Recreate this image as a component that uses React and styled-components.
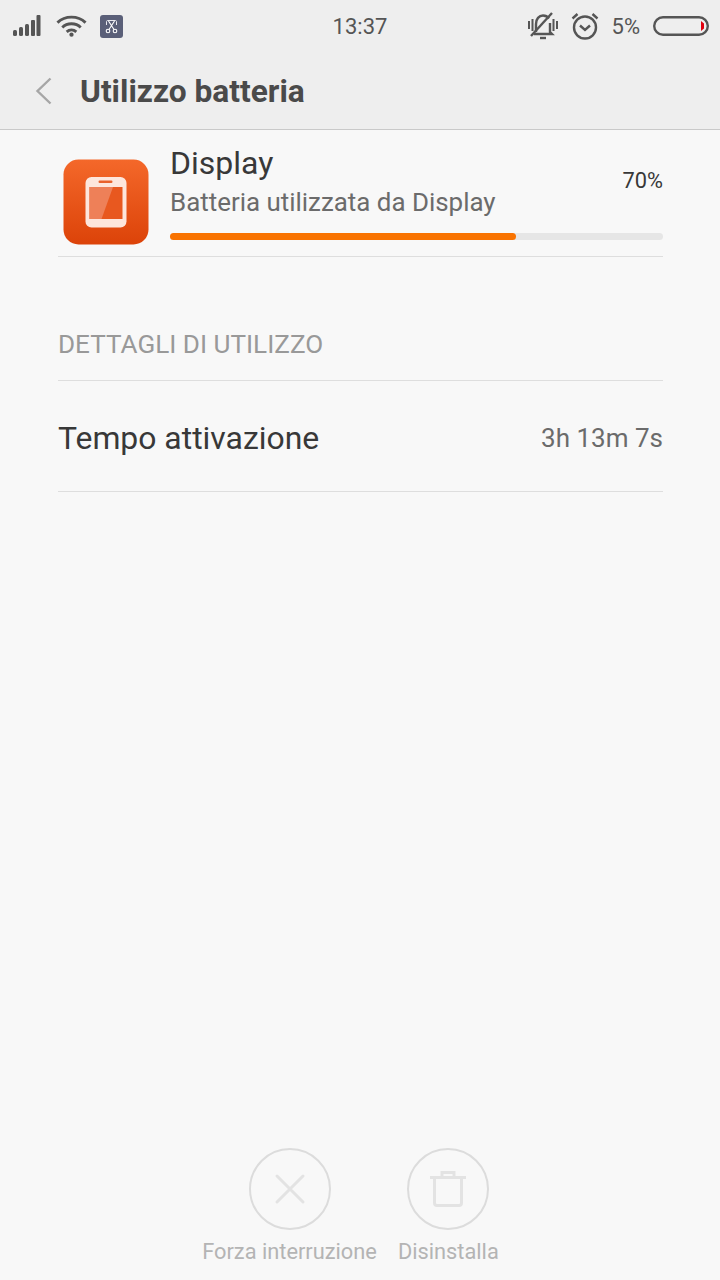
import React from 'react';
import styled, { createGlobalStyle } from 'styled-components';

const GlobalStyle = createGlobalStyle`
  html, body {
    margin: 0;
    padding: 0;
    background: #f8f8f8;
    font-family: Roboto, "Noto Sans", sans-serif;
  }
`;

const Page = styled.div`
  display: flex;
  flex-direction: column;
  height: 1280px;
  width: 720px;
  overflow: hidden;
  background: #f8f8f8;
`;

const Header = styled.header`
  background: #eeeeee;
  border-bottom: 1px solid #c9c9c9;
  box-sizing: border-box;
  height: 130px;
`;

const StatusBar = styled.div`
  align-items: center;
  display: grid;
  grid-template-columns: 1fr auto 1fr;
  height: 52px;
  padding: 0 11px 0 13px;
  color: #555;
`;

const StatusGroup = styled.div`
  align-items: center;
  display: flex;
  gap: ${(p) => p.$gap || 0}px;
  justify-content: ${(p) => (p.$end ? 'flex-end' : 'flex-start')};
`;

const Clock = styled.div`
  font-size: 22px;
  color: #555;
  padding-right: 2px;
`;

const Percent = styled.span`
  font-size: 22px;
  color: #555;
`;

const TitleRow = styled.div`
  align-items: center;
  display: flex;
  gap: 27px;
  height: 78px;
  padding: 0 0 0 35px;
`;

const Title = styled.h1`
  color: #4a4a4a;
  font-size: 31.7px;
  font-weight: 700;
  margin: 0;
`;

const Content = styled.main`
  display: flex;
  flex: 1;
  flex-direction: column;
  padding: 0 57px 0 58px;
`;

const AppRow = styled.section`
  border-bottom: 1px solid #dedede;
  box-sizing: border-box;
  display: flex;
  gap: 21px;
  height: 127px;
  padding: 14px 0 0 5px;
`;

const AppIconWrap = styled.div`
  line-height: 0;
  padding-top: 15px;
`;

const AppInfo = styled.div`
  display: flex;
  flex: 1;
  flex-direction: column;
`;

const AppLine = styled.div`
  align-items: center;
  display: flex;
  justify-content: space-between;
`;

const AppName = styled.div`
  color: #383838;
  font-size: 32px;
  line-height: 38px;
`;

const AppDesc = styled.div`
  color: #6b6b6b;
  font-size: 25.9px;
  line-height: 40px;
`;

const AppPercent = styled.div`
  color: #383838;
  font-size: 21.8px;
  padding-bottom: 6px;
`;

const Track = styled.div`
  background: #e6e6e6;
  border-radius: 4px;
  height: 7px;
  margin-top: 11px;
`;

const Fill = styled.div`
  background: #f97300;
  border-radius: 4px;
  height: 100%;
`;

const SectionTitle = styled.div`
  border-bottom: 1px solid #dedede;
  box-sizing: border-box;
  color: #999;
  font-size: 26.1px;
  height: 124px;
  line-height: 28px;
  padding-top: 73px;
`;

const DetailRow = styled.div`
  align-items: center;
  border-bottom: 1px solid #dedede;
  box-sizing: border-box;
  display: flex;
  height: 111px;
  justify-content: space-between;
  padding-top: 4px;
`;

const DetailLabel = styled.div`
  color: #383838;
  font-size: 31.9px;
`;

const DetailValue = styled.div`
  color: #6b6b6b;
  font-size: 26px;
`;

const Footer = styled.footer`
  display: flex;
  gap: 21px;
  justify-content: center;
  padding: 0 19px 15px 0;
`;

const Action = styled.div`
  align-items: center;
  display: flex;
  flex-direction: column;
  gap: 9px;
`;

const ActionCircle = styled.div`
  align-items: center;
  border: 2px solid #dcdcdc;
  border-radius: 50%;
  box-sizing: border-box;
  display: flex;
  height: 82px;
  justify-content: center;
  width: 82px;
`;

const ActionLabel = styled.div`
  color: #b4b4b4;
  font-size: 21.8px;
  line-height: 26px;
`;

function SignalIcon() {
  return (
    <svg width="30" height="22" viewBox="0 0 30 22" fill="#555">
      <rect x="0" y="15" width="4" height="6" rx="1.5" />
      <rect x="6" y="12" width="4" height="9" rx="1.5" />
      <rect x="12" y="9" width="4" height="12" rx="1.5" />
      <rect x="18" y="5" width="4" height="16" rx="1" />
      <rect x="23.5" y="0" width="4" height="21" rx="1" />
    </svg>
  );
}

function WifiIcon() {
  return (
    <svg width="31" height="24" viewBox="0 0 32 24" fill="none" stroke="#555" strokeWidth="3">
      <path d="M1.5 8.5C9.5 1 22.5 1 30.5 8.5" />
      <path d="M6.5 13.5C11.5 8.5 20.5 8.5 25.5 13.5" />
      <path d="M11 18C14 15.5 18 15.5 21 18" />
      <circle cx="16" cy="21" r="2.2" fill="#555" stroke="none" />
    </svg>
  );
}

function ScissorsIcon() {
  return (
    <svg width="23" height="23" viewBox="0 0 23 23" fill="none">
      <rect width="23" height="23" rx="3" fill="#5a5f78" />
      <path d="M6.5 10V6.5C6.5 6 7 5.5 7.5 5.5H15.5C16 5.5 16.5 6 16.5 6.5V10" stroke="#e8e8ee" strokeWidth="1" />
      <path d="M8.5 6L14 14.5M14.5 6L9 14.5" stroke="#fff" strokeWidth="1.1" />
      <circle cx="8" cy="16" r="1.8" stroke="#fff" strokeWidth="1.1" />
      <circle cx="15" cy="16" r="1.8" stroke="#fff" strokeWidth="1.1" />
    </svg>
  );
}

function MuteIcon() {
  return (
    <svg width="30" height="28" viewBox="0 0 30 28" fill="none" stroke="#555" strokeWidth="2.4">
      <path d="M1 9V17M4.5 7V19M25.5 7V19M29 9V17" strokeWidth="2" />
      <path d="M8 20V12C8 7 11 3.5 15 3.5C17.5 3.5 19.5 4.5 21 6.5M22 11V20L24 22H6" />
      <path d="M12 26H18" />
      <path d="M3 24L24 1" />
    </svg>
  );
}

function AlarmIcon() {
  return (
    <svg width="28" height="28" viewBox="0 0 28 28" fill="none" stroke="#555" strokeWidth="2.4">
      <circle cx="14" cy="15.5" r="11" />
      <path d="M9 13.5L14 18L19 13.5" />
      <path d="M1.5 6.5L6.5 2M26.5 6.5L21.5 2" />
    </svg>
  );
}

function BatteryIcon() {
  return (
    <svg width="56" height="20" viewBox="0 0 56 20" fill="none">
      <rect x="1.2" y="1.2" width="53.6" height="17.6" rx="8.8" stroke="#555" strokeWidth="2.4" />
      <path d="M48 5L51 7.5V12.5L48 15Z" fill="#e0000f" />
    </svg>
  );
}

function BackIcon() {
  return (
    <svg width="18" height="28" viewBox="0 0 18 28" fill="none" stroke="#a6a6a6" strokeWidth="2.4">
      <path d="M15.5 1.5L2.5 14L15.5 26.5" />
    </svg>
  );
}

function DisplayAppIcon() {
  return (
    <svg width="86" height="86" viewBox="0 0 86 86">
      <defs>
        <linearGradient id="appBg" x1="0" y1="0" x2="0" y2="1">
          <stop offset="0" stopColor="#f4682a" />
          <stop offset="1" stopColor="#dc4309" />
        </linearGradient>
      </defs>
      <rect x="0.5" y="0.5" width="85" height="85" rx="15" fill="url(#appBg)" />
      <rect x="22.5" y="18" width="41" height="50.5" rx="6" fill="#fde6dc" />
      <rect x="35.5" y="21.5" width="14" height="2.5" rx="1.2" fill="#e9622c" />
      <rect x="26.5" y="28" width="33" height="32" fill="#e8581f" />
      <path d="M26.5 28H50L38.5 60H26.5Z" fill="#ee8058" />
    </svg>
  );
}

function CloseIcon() {
  return (
    <svg width="32" height="32" viewBox="0 0 32 32" stroke="#e3e3e3" strokeWidth="3" fill="none" strokeLinecap="round">
      <path d="M3 3L29 29M29 3L3 29" />
    </svg>
  );
}

function TrashIcon() {
  return (
    <svg width="38" height="38" viewBox="0 0 38 38" stroke="#e3e3e3" strokeWidth="3" fill="none">
      <path d="M1 7.5H37" />
      <path d="M13 7V2.5H25V7" />
      <path d="M5.5 8V33C5.5 34.5 6.5 35.5 8 35.5H30C31.5 35.5 32.5 34.5 32.5 33V8" />
    </svg>
  );
}

export default function App() {
  return (
    <Page>
      <GlobalStyle />
      <Header>
        <StatusBar>
          <StatusGroup $gap={13}>
            <SignalIcon />
            <WifiIcon />
            <ScissorsIcon />
          </StatusGroup>
          <Clock>13:37</Clock>
          <StatusGroup $gap={13} $end>
            <MuteIcon />
            <AlarmIcon />
            <Percent>5%</Percent>
            <BatteryIcon />
          </StatusGroup>
        </StatusBar>
        <TitleRow>
          <BackIcon />
          <Title>Utilizzo batteria</Title>
        </TitleRow>
      </Header>
      <Content>
        <AppRow>
          <AppIconWrap>
            <DisplayAppIcon />
          </AppIconWrap>
          <AppInfo>
            <AppLine>
              <div>
                <AppName>Display</AppName>
                <AppDesc>Batteria utilizzata da Display</AppDesc>
              </div>
              <AppPercent>70%</AppPercent>
            </AppLine>
            <Track>
              <Fill style={{ width: '70.2%' }} />
            </Track>
          </AppInfo>
        </AppRow>
        <SectionTitle>DETTAGLI DI UTILIZZO</SectionTitle>
        <DetailRow>
          <DetailLabel>Tempo attivazione</DetailLabel>
          <DetailValue>3h 13m 7s</DetailValue>
        </DetailRow>
      </Content>
      <Footer>
        <Action>
          <ActionCircle>
            <CloseIcon />
          </ActionCircle>
          <ActionLabel>Forza interruzione</ActionLabel>
        </Action>
        <Action>
          <ActionCircle>
            <TrashIcon />
          </ActionCircle>
          <ActionLabel>Disinstalla</ActionLabel>
        </Action>
      </Footer>
    </Page>
  );
}
